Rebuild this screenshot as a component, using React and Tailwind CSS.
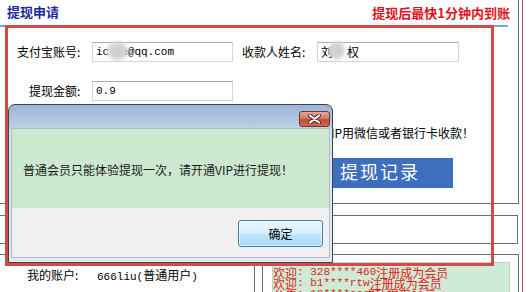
import React from "react";

function M({ children }) {
  return <span className="font-['Liberation_Mono',monospace] text-[11px]">{children}</span>;
}

function Field({ className, children }) {
  return (
    <div className={"relative h-[20px] border border-[#d3d6da] border-t-[#a9adb3] bg-white flex items-center pl-[3px] whitespace-nowrap leading-[16px] " + className}>
      {children}
    </div>
  );
}

function Line({ children }) {
  return <div className="h-[11px] leading-[11px] flex items-center whitespace-nowrap">{children}</div>;
}

export default function App() {
  return (
    <div className="relative w-[529px] h-[292px] overflow-hidden bg-white font-['Noto_Sans_CJK_SC','Liberation_Sans',sans-serif] text-[12px] text-black">
      {/* upper panel */}
      <div className="w-[519px] h-[204px] border-r border-b border-[#6e6e6e] flex flex-col">
        <div className="h-[25px] flex items-center justify-between pl-[7px] pr-[8px]">
          <span className="text-[13px] font-bold text-[#1a2a9a] leading-[13px] -mt-[2px]">提现申请</span>
          <span className="text-[13px] font-bold text-[#e0141e] leading-[13px]">提现后最快1分钟内到账</span>
        </div>
        <div className="h-[2px] w-[508px] bg-[#6ea6d6]" />
        <div className="mt-[15px] flex items-center">
          <div className="w-[92px] pl-[17px] leading-[20px] whitespace-nowrap">支付宝账号:</div>
          <Field className="w-[141px]">
            <M>ic</M>
            <span className="inline-block w-[12px]" />
            <M>e@qq.com</M>
            <div className="absolute left-[11px] top-[-4px] w-[27px] h-[24px] rounded-full bg-[radial-gradient(closest-side,#cdcdcd,#d6d6d6_55%,rgba(235,235,235,0)_100%)]" />
          </Field>
          <div className="w-[84px] pl-[9px] leading-[20px] whitespace-nowrap">收款人姓名:</div>
          <Field className="w-[142px]">
            <span>刘</span>
            <span className="inline-block w-[14px]" />
            <span>权</span>
            <div className="absolute left-[9px] top-[-4px] w-[20px] h-[23px] rounded-full bg-[radial-gradient(closest-side,#cdcdcd,#d6d6d6_55%,rgba(235,235,235,0)_100%)]" />
          </Field>
        </div>
        <div className="mt-[19px] flex items-center">
          <div className="w-[92px] pl-[29px] leading-[20px] whitespace-nowrap">提现金额:</div>
          <Field className="w-[141px]">
            <M>0.9</M>
          </Field>
        </div>
        <div className="mt-[24px] w-[474px] flex justify-end leading-[16px] whitespace-nowrap">
          提示：普通用户需开通VIP用微信或者银行卡收款！
        </div>
        <div className="mt-[17px] ml-[300px] w-[153px] h-[30px] bg-[#3e6fbf] flex items-center pl-[40px] text-white text-[18px] tracking-[2px] leading-[20px] font-['Liberation_Serif','Noto_Sans_CJK_SC',serif]">
          提现记录
        </div>
      </div>

      {/* middle row */}
      <div className="mt-[11px] w-[518px] h-[29px] border-t border-b border-r border-[#6e6e6e]" />

      {/* lower row */}
      <div className="mt-[10px] w-[519px] h-[40px] border-t border-r border-[#6e6e6e] flex">
        <div className="w-[255px] border-r border-[#6e6e6e] pt-[12px] pl-[27px] flex leading-[16px] whitespace-nowrap">
          <span className="w-[70px]">我的账户:</span>
          <span>
            <M>666liu(</M>普通用户<M>)</M>
          </span>
        </div>
        <div className="ml-[7px] flex-1 border-l border-[#6e6e6e] pt-[7px] pl-[9px]">
          <div className="w-[238px] h-[40px] bg-[#cdebd5] border border-[#c6d3c8] text-[#e21c1c] pt-[4px]">
            <Line>欢迎<M>: 328****460</M>注册成为会员</Line>
            <Line>欢迎<M>: b1****rtw</M>注册成为会员</Line>
            <Line>公告<M>: 18****cc </M>成功提现<M> </M>21元</Line>
          </div>
        </div>
      </div>

      {/* right frame line */}
      <div className="absolute left-[522px] top-0 h-full w-[1px] bg-[#b54a56]" />

      {/* red annotation */}
      <div className="absolute left-[5px] top-[25px] w-[489px] h-[241px] border-[3px] border-[#d84848]" />

      {/* dialog */}
      <div className="absolute left-[8px] top-[104px] w-[325px] h-[159px] rounded-t-[7px] border border-[#3a4350] bg-[linear-gradient(to_bottom,#9cb5d7_0px,#bccfe5_23px,#dae3ee_24px,#e2e9f1_100%)] flex flex-col overflow-hidden">
        <div className="h-[23px] flex justify-end items-start pt-[6px] pr-[2px]">
          <div className="w-[31px] h-[16px] rounded-[3px] border border-[#7a3327] bg-[linear-gradient(to_bottom,#e6a898_0%,#d27a66_45%,#c24a36_55%,#d06a55_100%)] flex items-center justify-center">
            <svg width="13" height="10" viewBox="0 0 13 10">
              <path d="M2 1.5 L11 8.5 M11 1.5 L2 8.5" stroke="#5a2218" strokeWidth="4" strokeLinecap="round" />
              <path d="M2 1.5 L11 8.5 M11 1.5 L2 8.5" stroke="#ffffff" strokeWidth="2.2" strokeLinecap="round" />
            </svg>
          </div>
        </div>
        <div className="mx-[2px] mb-[4px] flex-1 border border-[#aebccd] flex flex-col">
          <div className="h-[79px] bg-[#cce8cf] flex items-center pl-[11px] pt-[3px] whitespace-nowrap leading-[16px] text-[#1a1a1a]">
            普通会员只能体验提现一次，请开通VIP进行提现！
          </div>
          <div className="flex-1 bg-[#f0f0f0] flex justify-end items-start pt-[12px] pr-[6px]">
            <div className="w-[85px] h-[27px] rounded-[3px] border border-[#3c7fb1] bg-[linear-gradient(to_bottom,#eaf6fd_0%,#d9f0fc_48%,#bee6fd_52%,#a7d9f5_100%)] shadow-[inset_0_0_0_1px_rgba(255,255,255,0.6)] flex items-center justify-center leading-[16px]">
              确定
            </div>
          </div>
        </div>
      </div>
    </div>
  );
}
